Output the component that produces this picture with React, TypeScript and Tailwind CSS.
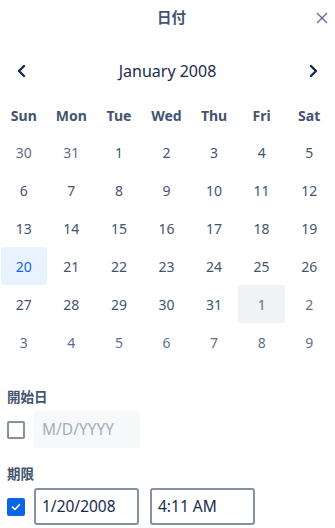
import React from "react";

const weekdays = ["Sun", "Mon", "Tue", "Wed", "Thu", "Fri", "Sat"];
type Day = { d: number; out?: boolean; sel?: boolean; hov?: boolean };
const days: Day[] = [
  { d: 30, out: true }, { d: 31, out: true }, { d: 1 }, { d: 2 }, { d: 3 }, { d: 4 }, { d: 5 },
  { d: 6 }, { d: 7 }, { d: 8 }, { d: 9 }, { d: 10 }, { d: 11 }, { d: 12 },
  { d: 13 }, { d: 14 }, { d: 15 }, { d: 16 }, { d: 17 }, { d: 18 }, { d: 19 },
  { d: 20, sel: true }, { d: 21 }, { d: 22 }, { d: 23 }, { d: 24 }, { d: 25 }, { d: 26 },
  { d: 27 }, { d: 28 }, { d: 29 }, { d: 30 }, { d: 31 }, { d: 1, out: true, hov: true }, { d: 2, out: true },
  { d: 3, out: true }, { d: 4, out: true }, { d: 5, out: true }, { d: 6, out: true }, { d: 7, out: true }, { d: 8, out: true }, { d: 9, out: true },
];

export default function App() {
  return (
    <div
      className="w-[335px] h-[528px] bg-white overflow-hidden text-[#44546f]"
      style={{ fontFamily: '"Noto Sans", "Noto Sans CJK JP", sans-serif' }}
    >
      <div className="relative h-[36px] flex items-center justify-center pl-[8px]">
        <span className="text-[14.5px] font-semibold text-[#44546f]">日付</span>
        <button className="absolute right-[4px] top-[9px] w-[18px] h-[18px] flex items-center justify-center text-[#626f86]">
          <svg width="12" height="12" viewBox="0 0 12 12" fill="none" stroke="currentColor" strokeWidth="1.4">
            <path d="M1 1 L11 11 M11 1 L1 11" />
          </svg>
        </button>
      </div>

      <div className="mt-[19px] h-[32px] flex items-center justify-between px-[15px]">
        <svg width="14" height="14" viewBox="0 0 14 14" fill="none" stroke="#172b4d" strokeWidth="2.4" strokeLinecap="round" strokeLinejoin="round">
          <path d="M9 2 L4 7 L9 12" />
        </svg>
        <span className="text-[16px] text-[#172b4d]">January 2008</span>
        <svg width="14" height="14" viewBox="0 0 14 14" fill="none" stroke="#172b4d" strokeWidth="2.4" strokeLinecap="round" strokeLinejoin="round">
          <path d="M5 2 L10 7 L5 12" />
        </svg>
      </div>

      <div className="mt-[10px] w-[333px] grid grid-cols-7">
        {weekdays.map((w) => (
          <div key={w} className="h-[36px] flex items-center justify-center text-[14px] font-bold text-[#44546f]">
            {w}
          </div>
        ))}
        {days.map((x, i) => (
          <div
            key={i}
            className={
              "h-[38px] mx-[0.5px] rounded-[3px] flex items-center justify-center text-[14px] " +
              (x.sel
                ? "bg-[#e9f2ff] text-[#0c66e4]"
                : x.hov
                ? "bg-[#f1f2f4] text-[#626f86]"
                : x.out
                ? "text-[#626f86]"
                : "text-[#44546f]")
            }
          >
            {x.d}
          </div>
        ))}
      </div>

      <div className="mt-[28px] px-[7px]">
        <div className="h-[16px] flex items-center text-[13.5px] font-bold text-[#44546f]">開始日</div>
        <div className="mt-[6px] flex items-center gap-[9px]">
          <div className="w-[18px] h-[18px] rounded-[2px] border-2 border-[#8590a2] bg-white" />
          <div className="w-[106px] h-[37px] rounded-[3px] bg-[#f7f8f9] flex items-center px-[8px] text-[15.5px] text-[#a5adba]">
            M/D/YYYY
          </div>
        </div>

        <div className="mt-[18px] h-[16px] flex items-center text-[13.5px] font-bold text-[#44546f]">期限</div>
        <div className="mt-[6px] flex items-center gap-[9px]">
          <div className="w-[18px] h-[18px] rounded-[2px] bg-[#0c66e4] flex items-center justify-center">
            <svg width="12" height="12" viewBox="0 0 12 12" fill="none" stroke="white" strokeWidth="1.6" strokeLinecap="round" strokeLinejoin="round">
              <path d="M2.5 6.2 L5 8.5 L9.5 3.5" />
            </svg>
          </div>
          <div className="w-[105px] h-[37px] rounded-[3px] border-2 border-[#8590a2] flex items-center px-[6px] text-[15.5px] text-[#172b4d]">
            1/20/2008
          </div>
          <div className="ml-[2px] w-[105px] h-[37px] rounded-[3px] border-2 border-[#8590a2] flex items-center px-[6px] text-[15.5px] text-[#172b4d]">
            4:11 AM
          </div>
        </div>
      </div>
    </div>
  );
}
